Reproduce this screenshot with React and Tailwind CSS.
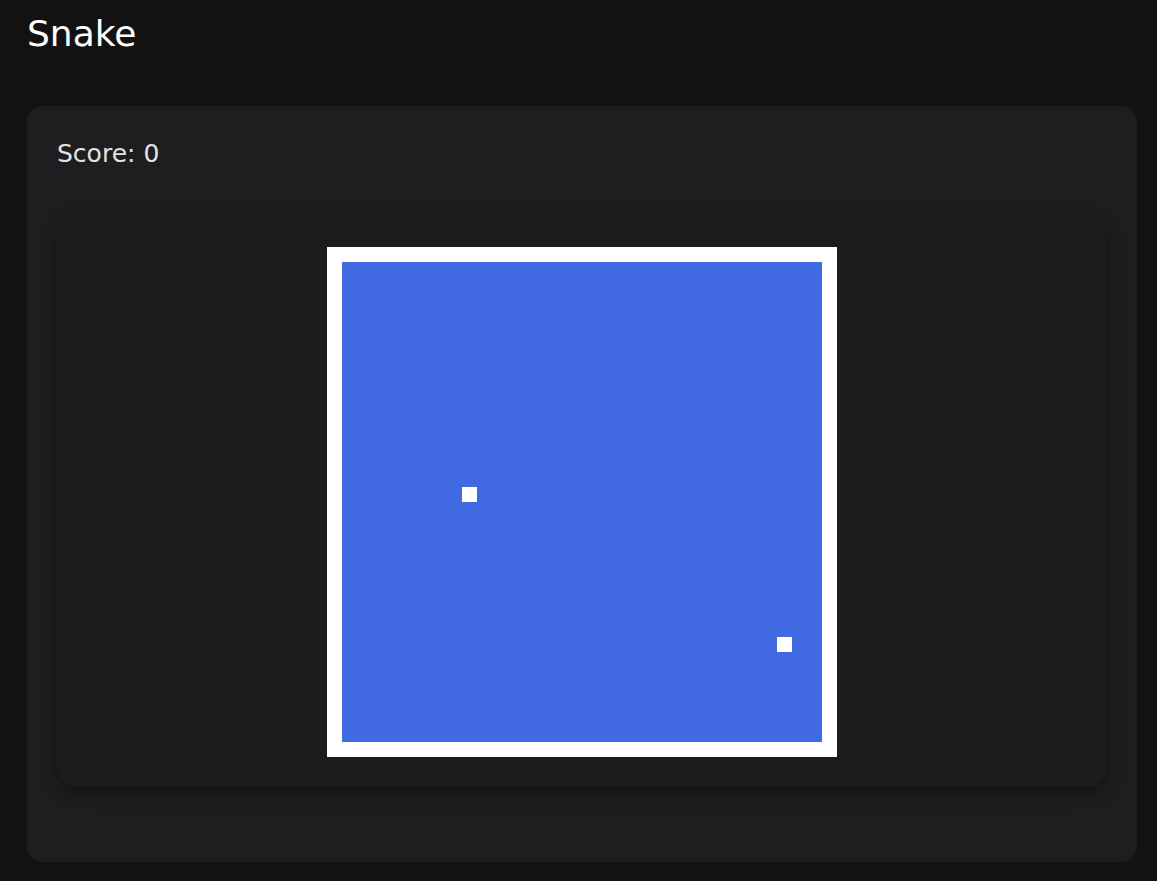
import React from "react";

const cells = [
  { x: 120, y: 225 },
  { x: 435, y: 375 },
];

const App = () => {
  return (
    <div className="min-h-screen bg-[#121212] pl-[27px] pr-[20px] pb-[20px] text-white" style={{ fontFamily: '"DejaVu Sans", Verdana, sans-serif' }}>
      {/* Title */}
      <h1 className="pt-[13px] text-[36px] leading-[42px] text-white">Snake</h1>

      {/* Game card */}
      <div className="mt-[51px] rounded-[16px] bg-[#1e1e20] px-[30px] pt-[34px] pb-[75px]">
        <p className="text-[25px] leading-[28px] text-[#e2e2e2]">Score: 0</p>

        <div className="mt-[46px] flex justify-center rounded-[20px] bg-[#1c1c1e] pt-[33px] pb-[30px] shadow-[0_6px_16px_rgba(0,0,0,0.35)]">
          <div className="relative h-[510px] w-[510px] border-[15px] border-white bg-[#4169e1]">
            {cells.map((c, i) => (
              <div
                key={i}
                className="absolute h-[15px] w-[15px] bg-white"
                style={{ left: c.x, top: c.y }}
              />
            ))}
          </div>
        </div>
      </div>
    </div>
  );
};

export default App;
